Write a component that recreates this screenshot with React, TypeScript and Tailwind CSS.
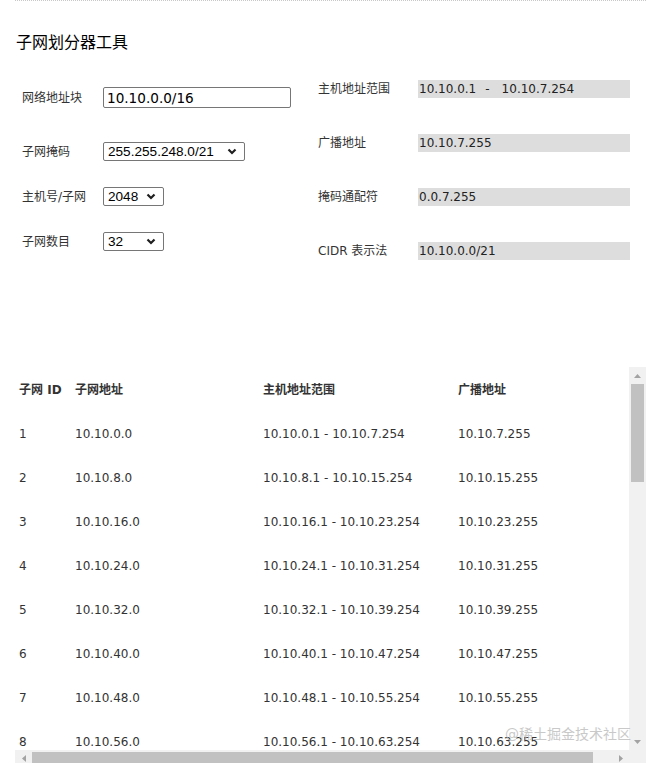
import React from "react";

const base = "font-['DejaVu_Sans','Noto_Sans_CJK_SC',sans-serif]";

const rows = Array.from({ length: 8 }, (_, i) => {
  const start = i * 8;
  const end = start + 7;
  return {
    id: i + 1,
    net: `10.10.${start}.0`,
    range: `10.10.${start}.1 - 10.10.${end}.254`,
    broadcast: `10.10.${end}.255`,
  };
});

function Chevron() {
  return (
    <svg width="10" height="7" viewBox="0 0 10 7">
      <path d="M1.5 1.5L5 5l3.5-3.5" fill="none" stroke="#1f1f1f" strokeWidth="2.2" />
    </svg>
  );
}

function Arrow({ dir }: { dir: "up" | "down" | "left" | "right" }) {
  const pts = {
    up: "0,4 3.5,0 7,4",
    down: "0,0 7,0 3.5,4",
    left: "4,0 4,7 0,3.5",
    right: "0,0 4,3.5 0,7",
  }[dir];
  const vertical = dir === "up" || dir === "down";
  return (
    <svg width={vertical ? 7 : 4} height={vertical ? 4 : 7} viewBox={vertical ? "0 0 7 4" : "0 0 4 7"}>
      <polygon points={pts} fill="#a3a3a3" />
    </svg>
  );
}

function Select({ value, width, options }: { value: string; width: string; options: string[] }) {
  return (
    <div className={`relative ${width}`}>
      <select
        defaultValue={value}
        className="block h-[19px] w-full appearance-none rounded-[2px] border border-[#767676] bg-white pl-[4px] font-['Liberation_Sans',Arial,sans-serif] text-[13.6px] leading-[17px] text-black outline-none"
      >
        {options.map((o) => (
          <option key={o}>{o}</option>
        ))}
      </select>
      <span className="pointer-events-none absolute right-[8px] top-[6px] flex">
        <Chevron />
      </span>
    </div>
  );
}

function FormRow({ label, children, className }: { label: string; children: React.ReactNode; className?: string }) {
  return (
    <div className={`flex items-center ${className ?? ""}`}>
      <span className="w-[81px] text-[12px] leading-[18px] text-[#333]">{label}</span>
      {children}
    </div>
  );
}

function InfoRow({ label, children }: { label: string; children: React.ReactNode }) {
  return (
    <div className="flex h-[18px] items-center">
      <span className="w-[100px] text-[12px] text-[#333]">{label}</span>
      <div className="h-[18px] w-[212px] whitespace-pre bg-[#dddddd] pl-[1px] text-[12px] leading-[18px] text-[#222]">
        {children}
      </div>
    </div>
  );
}

export default function App() {
  return (
    <div className={`min-h-[763px] w-[649px] overflow-hidden bg-white ${base}`}>
      <div className="ml-[15px] w-[631px] border-t border-dotted border-[#c8c8c8]">
        <h1 className="mt-[32px] pl-[1px] text-[16px] leading-[20px] font-normal text-black">子网划分器工具</h1>

        <div className="flex h-[207px] items-start">
          <div className="flex w-[303px] flex-col pl-[7px] pt-[34px]">
            <FormRow label="网络地址块">
              <input
                defaultValue="10.10.0.0/16"
                className="block h-[21px] w-[188px] rounded-[2px] border border-[#767676] px-[3px] text-[13.6px] text-black outline-none"
              />
            </FormRow>
            <FormRow label="子网掩码" className="mt-[34px]">
              <Select
                value="255.255.248.0/21"
                width="w-[142px]"
                options={["255.255.0.0/16", "255.255.248.0/21", "255.255.255.0/24"]}
              />
            </FormRow>
            <FormRow label="主机号/子网" className="mt-[26px]">
              <Select value="2048" width="w-[61px]" options={["1024", "2048", "4096"]} />
            </FormRow>
            <FormRow label="子网数目" className="mt-[26px]">
              <Select value="32" width="w-[61px]" options={["16", "32", "64"]} />
            </FormRow>
          </div>

          <div className="flex flex-col gap-[36px] pt-[27px]">
            <InfoRow label="主机地址范围">
              10.10.0.1<span className="ml-[9px] mr-[12px]">-</span>10.10.7.254
            </InfoRow>
            <InfoRow label="广播地址">10.10.7.255</InfoRow>
            <InfoRow label="掩码通配符">0.0.7.255</InfoRow>
            <InfoRow label="CIDR 表示法">10.10.0.0/21</InfoRow>
          </div>
        </div>

        <div className="relative mt-[107px] flex flex-col">
          <div className="flex h-[383px]">
            <div className="flex-1 overflow-hidden pt-[1px]">
              <table className="w-[640px] table-fixed border-collapse text-[12px] text-[#333]">
                <colgroup>
                  <col className="w-[56px]" />
                  <col className="w-[188px]" />
                  <col className="w-[195px]" />
                  <col />
                </colgroup>
                <thead>
                  <tr className="h-[44px]">
                    <th className="pl-[4px] text-left font-bold">子网 ID</th>
                    <th className="pl-[4px] text-left font-bold">子网地址</th>
                    <th className="pl-[4px] text-left font-bold">主机地址范围</th>
                    <th className="pl-[4px] text-left font-bold">广播地址</th>
                  </tr>
                </thead>
                <tbody>
                  {rows.map((r) => (
                    <tr key={r.id} className="h-[44px]">
                      <td className="pl-[4px]">{r.id}</td>
                      <td className="pl-[4px]">{r.net}</td>
                      <td className="pl-[4px]">{r.range}</td>
                      <td className="pl-[4px]">{r.broadcast}</td>
                    </tr>
                  ))}
                </tbody>
              </table>
            </div>
            <div className="flex w-[17px] flex-col bg-[#f1f1f1]">
              <div className="flex h-[17px] items-center justify-center">
                <Arrow dir="up" />
              </div>
              <div className="flex-1">
                <div className="mx-[2px] h-[98px] bg-[#c1c1c1]" />
              </div>
              <div className="flex h-[17px] items-center justify-center">
                <Arrow dir="down" />
              </div>
            </div>
          </div>
          <div className="flex h-[17px] bg-[#f1f1f1]">
            <div className="flex w-[17px] items-center justify-center">
              <Arrow dir="left" />
            </div>
            <div className="flex-1 py-[2px]">
              <div className="h-full w-[561px] bg-[#c1c1c1]" />
            </div>
            <div className="flex w-[17px] items-center justify-center">
              <Arrow dir="right" />
            </div>
            <div className="w-[17px] bg-[#f1f1f1]" />
          </div>

          <span className="pointer-events-none absolute left-[490px] top-[358px] text-[14px] leading-[18px] text-[#c4c4c4] opacity-90">
            @稀土掘金技术社区
          </span>
        </div>
      </div>
    </div>
  );
}
